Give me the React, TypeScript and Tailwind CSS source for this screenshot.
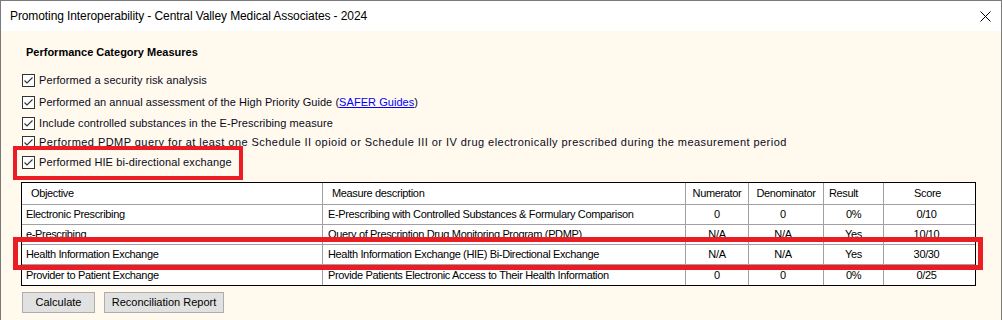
import React from "react";

const Check = () => (
  <svg width="13" height="13" viewBox="0 0 13 13" className="shrink-0">
    <rect x="0.5" y="0.5" width="12" height="12" fill="#ffffff" stroke="#333333" />
    <path d="M2.5 6.5 L5 9 L10.5 3.5" fill="none" stroke="#333333" strokeWidth="1.1" />
  </svg>
);

const checks: { h: string; t: string; content: React.ReactNode }[] = [
  { h: "h-[21px]", t: "tracking-[0.1px]", content: "Performed a security risk analysis" },
  {
    h: "h-[22px]",
    t: "tracking-[0.05px]",
    content: (
      <>
        Performed an annual assessment of the High Priority Guide (
        <span className="text-[#0000ff] underline">SAFER Guides</span>)
      </>
    ),
  },
  { h: "h-[20px]", t: "tracking-[0.07px]", content: "Include controlled substances in the E-Prescribing measure" },
  {
    h: "h-[19px]",
    t: "tracking-[0.45px]",
    content:
      "Performed PDMP query for at least one Schedule II opioid or Schedule III or IV drug electronically prescribed during the measurement period",
  },
  { h: "h-[20px]", t: "tracking-[0.1px]", content: "Performed HIE bi-directional exchange" },
];

const rows = [
  ["Electronic Prescribing", "E-Prescribing with Controlled Substances & Formulary Comparison", "0", "0", "0%", "0/10"],
  ["e-Prescribing", "Query of Prescription Drug Monitoring Program (PDMP)", "N/A", "N/A", "Yes", "10/10"],
  ["Health Information Exchange", "Health Information Exchange (HIE) Bi-Directional Exchange", "N/A", "N/A", "Yes", "30/30"],
  ["Provider to Patient Exchange", "Provide Patients Electronic Access to Their Health Information", "0", "0", "0%", "0/25"],
];

export default function App() {
  return (
    <div
      className="w-[1002px] h-[320px] overflow-hidden border-l border-t border-r border-[#7a7a7a] bg-[#fff9ee] flex flex-col text-black"
      style={{ fontFamily: '"Liberation Sans", Arial, sans-serif' }}
    >
      {/* Title bar */}
      <div className="h-[30px] shrink-0 bg-white flex items-center justify-between pl-[9px] pr-[10px]">
        <span className="text-[12px] text-black tracking-[-0.1px]">
          Promoting Interoperability - Central Valley Medical Associates - 2024
        </span>
        <svg width="11" height="11" viewBox="0 0 11 11">
          <path d="M0.5 0.5 L10.5 10.5 M10.5 0.5 L0.5 10.5" stroke="#000" strokeWidth="1" />
        </svg>
      </div>

      {/* Content */}
      <div className="relative flex-1 flex flex-col pl-[20px] pt-[14px] text-[11px]">
        <div className="h-[14px] leading-[14px] font-bold pl-[5px]">Performance Category Measures</div>
        <div className="mt-[11px] flex flex-col">
          {checks.map((c, i) => (
            <div key={i} className={`${c.h} flex items-center gap-[4px] pl-[1px]`}>
              <Check />
              <span className={`whitespace-nowrap leading-[13px] text-[#0a0a1a] ${c.t}`}>{c.content}</span>
            </div>
          ))}
        </div>

        {/* Table */}
        <div className="mt-[10px] w-[955px] border border-black bg-white tracking-[-0.35px]">
          <div className="grid grid-cols-[301px_363px_63px_75px_60px_91px]">
            <div className="h-[22px] border-r border-b border-[#a0a0a0] flex items-center pl-[9px]">Objective</div>
            <div className="h-[22px] border-r border-b border-[#a0a0a0] flex items-center pl-[9px]">Measure description</div>
            <div className="h-[22px] border-r border-b border-[#a0a0a0] flex items-center justify-center">Numerator</div>
            <div className="h-[22px] border-r border-b border-[#a0a0a0] flex items-center justify-center">Denominator</div>
            <div className="h-[22px] border-r border-b border-[#a0a0a0] flex items-center pl-[5px]">Result</div>
            <div className="h-[22px] border-b border-[#a0a0a0] flex items-center justify-center pr-[4px]">Score</div>
            {rows.map((r, i) => {
              const b = i < rows.length - 1 ? "border-b" : "";
              return (
                <React.Fragment key={i}>
                  <div className={`h-[20px] ${b} border-r border-[#a0a0a0] flex items-center pl-[4px] whitespace-nowrap`}>{r[0]}</div>
                  <div className={`h-[20px] ${b} border-r border-[#a0a0a0] flex items-center pl-[5px] whitespace-nowrap`}>{r[1]}</div>
                  <div className={`h-[20px] ${b} border-r border-[#a0a0a0] flex items-center justify-center`}>{r[2]}</div>
                  <div className={`h-[20px] ${b} border-r border-[#a0a0a0] flex items-center justify-center pr-[6px]`}>{r[3]}</div>
                  <div className={`h-[20px] ${b} border-r border-[#a0a0a0] flex items-center justify-center`}>{r[4]}</div>
                  <div className={`h-[20px] ${b} border-[#a0a0a0] flex items-center justify-center pr-[6px]`}>{r[5]}</div>
                </React.Fragment>
              );
            })}
          </div>
        </div>

        {/* Buttons */}
        <div className="mt-[6px] flex gap-[9px] pl-[1px]">
          <button className="w-[73px] h-[21px] bg-[#e1e1e1] border border-[#adadad] text-[11px] text-black flex items-center justify-center">
            Calculate
          </button>
          <button className="w-[120px] h-[21px] bg-[#e1e1e1] border border-[#adadad] text-[11px] text-black flex items-center justify-center">
            Reconciliation Report
          </button>
        </div>

        {/* Red annotation boxes */}
        <div className="absolute left-[12px] top-[115px] w-[230px] h-[34px] border-[4px] border-[#ec1c24] pointer-events-none" />
        <div className="absolute left-[12px] top-[206px] w-[970px] h-[33px] border-[5px] border-[#ec1c24] pointer-events-none" />
      </div>
    </div>
  );
}
